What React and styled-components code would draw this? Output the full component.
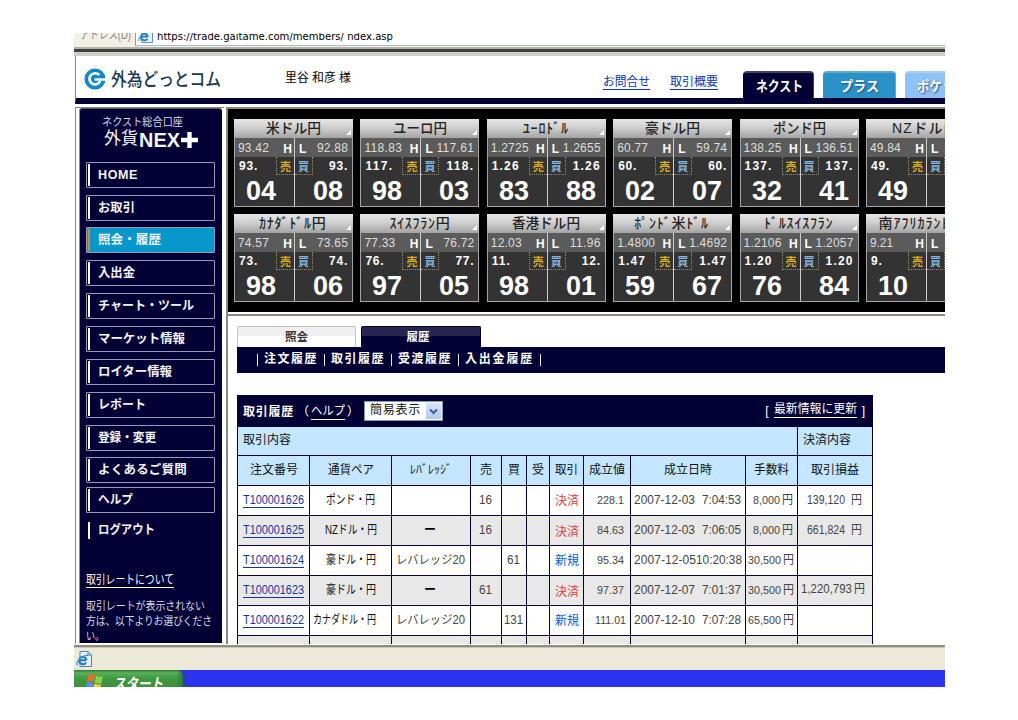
import React, { useLayoutEffect, useRef } from "react";
import styled, { createGlobalStyle, css } from "styled-components";

const Global = createGlobalStyle`
  * { box-sizing: border-box; }
  body { margin: 0; background: #fff; font-family: "Liberation Sans", "Noto Sans CJK JP", sans-serif; font-size: 12px; color: #000; }
`;

const NAVY = "#020034";

/* Text set to a fixed measure: tracked out when short, condensed when long. */
const FitBox = styled.span`
  display: inline-block;
  flex: none;
  width: ${(p) => p.$w}px;
  line-height: ${(p) => (p.$lh ? p.$lh + "px" : "1.3")};
  white-space: pre;
  text-align: left;
  font-size: ${(p) => (p.$size ? p.$size + "px" : "inherit")};
  color: ${(p) => p.$color || "inherit"};
  ${(p) => p.$bold && css`font-weight: ${p.$bold === true ? 700 : p.$bold};`}
  ${(p) => p.$line && css`border-bottom: 1px solid currentColor; line-height: 1.1;`}
`;
const FitInner = styled.span`
  display: inline-block;
  transform-origin: 0 50%;
`;
function Fit({ w, size, color, bold, line, lh, children }) {
  const ref = useRef(null);
  useLayoutEffect(() => {
    const el = ref.current;
    el.style.transform = "none";
    el.style.letterSpacing = "0px";
    const natural = el.getBoundingClientRect().width;
    const count = el.textContent.length;
    if (natural > w) el.style.transform = `scaleX(${w / natural})`;
    else if (count > 1) el.style.letterSpacing = `${(w - natural) / count}px`;
  }, [w, children]);
  return (
    <FitBox $w={w} $size={size} $color={color} $bold={bold} $line={line} $lh={lh}>
      <FitInner ref={ref}>{children}</FitInner>
    </FitBox>
  );
}

const Screen = styled.div`
  width: 1018px;
  height: 720px;
  padding: 33px 73px 33px 74px;
  overflow: hidden;
  background: #fff;
`;
const Browser = styled.div`
  width: 871px;
  height: 654px;
  display: flex;
  flex-direction: column;
  overflow: hidden;
`;
const AddressBar = styled.div`
  height: 14px;
  flex: none;
  display: flex;
  background: #f1efe6;
  overflow: hidden;
`;
const AddressLabel = styled.div`
  width: 61px;
  padding-left: 6px;
  color: #8a8880;
  margin-top: -5px;
`;
const AddressField = styled.div`
  flex: 1;
  height: 13px;
  display: flex;
  gap: 4px;
  padding-left: 2px;
  background: #fff;
  border-left: 1px solid #7f9db9;
  border-bottom: 1px solid #a9bccd;
  font-family: "DejaVu Sans", sans-serif;
  svg { margin-top: -5px; }
`;
const AddressText = styled.div`
  margin-top: -4px;
`;
const FrameEdge = styled.div`
  flex: none;
  height: 9px;
  border-top: 2px solid #b5b2a6;
  border-bottom: 4px solid #cdcdcd;
  background: #3f3f3f;
`;

const Header = styled.header`
  flex: none;
  height: 48px;
  margin-left: 1px;
  display: flex;
  border-left: 1px solid #8c8a80;
  border-bottom: 6px solid ${NAVY};
  background: #fff;
`;
const Brand = styled.div`
  width: 209px;
  padding: 0 0 0 8px;
  height: 46px;
  display: flex;
  align-items: center;
  gap: 5px;
`;
const BrandName = styled.div`
  padding-top: 4px;
`;
const UserName = styled.div`
  width: 318px;
  height: 46px;
  display: flex;
  align-items: center;
`;
const TopLinks = styled.nav`
  width: 140px;
  height: 54px;
  display: flex;
  align-items: center;
  gap: 20px;
  color: #0a35b8;
`;
const ServiceTabs = styled.div`
  display: flex;
  gap: 9px;
  padding-top: 15px;
  width: 202px;
  overflow: hidden;
`;
const ServiceTab = styled.div`
  flex: none;
  width: ${(p) => p.$w}px;
  height: 27px;
  padding: 4px 0 0 ${(p) => p.$pad}px;
  border-radius: 4px 4px 0 0;
  border-top: 2px solid ${(p) => p.$edge};
  border-right: 1px solid ${(p) => p.$edge};
  background: ${(p) => p.$bg};
  color: #fff;
  text-shadow: ${(p) => (p.$shade ? "1px 1px 2px #234e7c" : "none")};
`;

const Panes = styled.div`
  flex: none;
  height: 538px;
  margin-left: 1px;
  margin-top: 3px;
  display: flex;
  background: #fff;
`;
const SidePane = styled.aside`
  width: 149px;
  height: 537px;
  padding-left: 3px;
  border-top: 1px solid #8c8a80;
  border-left: 1px solid #8c8a80;
`;
const SideMenu = styled.div`
  width: 143px;
  height: 535px;
  padding: 6px 0 0 6px;
  background: ${NAVY};
  border-left: 1px solid #8c8a94;
  border-top: 1px solid #55536a;
  border-radius: 3px 3px 0 0;
  overflow: hidden;
  color: #f4f4f8;
`;
const Product = styled.div`
  height: 47px;
  display: flex;
  flex-direction: column;
`;
const ProductSub = styled.div`
  padding-left: 16px;
  height: 15px;
  display: flex;
  align-items: center;
`;
const ProductName = styled.div`
  padding-left: 18px;
  height: 19px;
  display: flex;
  align-items: center;
  gap: 1px;
`;
const MenuItem = styled.div`
  width: 129px;
  height: 26px;
  margin-top: ${(p) => p.$gap}px;
  padding: 1px 0 1px 1px;
  display: flex;
  align-items: center;
  border: 1px solid ${(p) => (p.$plain ? "transparent" : "#9a99b4")};
  border-radius: 1px;
  background: ${(p) => (p.$on ? "#0798cb" : "transparent")};
`;
const MenuMark = styled.span`
  width: 2px;
  height: ${(p) => (p.$short ? "17px" : "22px")};
  margin-right: 8px;
  background: ${(p) => (p.$on ? "#c98d33" : "#fff")};
`;
const SideNotes = styled.div`
  margin-top: 31px;
  display: flex;
  flex-direction: column;
  align-items: flex-start;
  color: #d9d9e4;
`;
const NoteLines = styled.p`
  margin: 11px 0 0;
  display: flex;
  flex-direction: column;
`;

const MainPane = styled.main`
  flex: 1;
  min-width: 0;
  margin-left: 2px;
  border-left: 2px solid #8c8a80;
  border-top: 2px solid #8c8a80;
  height: 537px;
  overflow: hidden;
`;
const QuoteBoard = styled.section`
  height: 203px;
  padding: 10px 0 0 6px;
  display: flex;
  flex-direction: column;
  gap: 7px;
  background: #000;
  overflow: hidden;
`;
const QuoteRow = styled.div`
  display: flex;
  gap: 7.4px;
`;
const Card = styled.article`
  flex: none;
  width: 119px;
  height: 88px;
  display: flex;
  flex-direction: column;
  background: #333;
  border: 1px solid #a5a5a5;
  border-top: 0;
`;
const CardTitle = styled.div`
  flex: none;
  height: 19px;
  margin: 0 -1px;
  display: flex;
  align-items: center;
  justify-content: center;
  background: linear-gradient(#e6e6e6, #cfcfcf 45%, #a4a4a4);
  color: #222;
  position: relative;
  &::after {
    content: "";
    position: absolute;
    right: 2px;
    bottom: 3px;
    border-left: 5px solid transparent;
    border-bottom: 5px solid #fff;
  }
`;
const Halves = styled.div`
  flex: 1;
  min-height: 0;
  display: flex;
`;
const Half = styled.div`
  flex: none;
  width: ${(p) => (p.$right ? 57 : 60)}px;
  display: flex;
  flex-direction: column;
  ${(p) => !p.$right && css`border-right: 1px solid #ccc;`}
`;
const Extreme = styled.div`
  flex: none;
  height: 19px;
  padding: 2px 4px 0 ${(p) => (p.$right ? 4 : 3)}px;
  ${(p) => !p.$right && css`padding-right: 2px;`}
  display: flex;
  align-items: center;
  justify-content: space-between;
  background: #5b5b5b;
  color: #dedede;
  b { font-size: 12px; color: #fff; }
`;
const Handle = styled.div`
  flex: none;
  height: 18px;
  display: flex;
  align-items: center;
  justify-content: space-between;
  color: #fff;
  padding: ${(p) => (p.$right ? "0 4px 0 0" : "0 0 0 4px")};
`;
const Side = styled.span`
  height: 18px;
  width: 18px;
  display: flex;
  align-items: center;
  justify-content: center;
  border: 1px dotted #998d70;
  border-top: 0;
  ${(p) => (p.$buy ? "border-left: 0;" : "border-right: 0;")}
  color: ${(p) => (p.$buy ? "#83b4dc" : "#dcae1c")};
  font-size: 11px;
  font-weight: 700;
`;
const Pips = styled.div`
  flex: 1;
  min-height: 0;
  padding-left: ${(p) => (p.$right ? 18 : 11)}px;
  display: flex;
  align-items: center;
  color: #fff;
`;

const History = styled.section`
  height: 332px;
  margin-top: 2px;
  border-top: 2px solid #8c8a80;
  padding: 10px 0 0 9px;
  overflow: hidden;
`;
const ViewTabs = styled.div`
  display: flex;
  gap: 5px;
`;
const ViewTab = styled.div`
  width: ${(p) => (p.$on ? 120 : 119)}px;
  height: 21px;
  display: flex;
  align-items: center;
  justify-content: center;
  padding-right: ${(p) => (p.$on ? 6 : 0)}px;
  border-radius: 2px 2px 0 0;
  border: 1px solid ${(p) => (p.$on ? NAVY : "#c4c4c4")};
  border-bottom: 0;
  background: ${(p) => (p.$on ? `linear-gradient(#28264e 9px, ${NAVY} 9px)` : "linear-gradient(#efefef 9px, #fff 9px)")};
  color: ${(p) => (p.$on ? "#fff" : "#333")};
`;
const SubNav = styled.nav`
  height: 26px;
  padding-left: 20px;
  display: flex;
  align-items: center;
  gap: 6px;
  background: ${NAVY};
  color: #fff;
`;
const Bar = styled.i`
  width: 1px;
  height: 12px;
  background: #e8e8f0;
`;
const Table = styled.div`
  width: 636px;
  margin-top: 22px;
  border-left: 1px solid ${NAVY};
`;
const Caption = styled.div`
  height: 32px;
  padding: 0 8px 0 5px;
  display: flex;
  align-items: center;
  background: ${NAVY};
  color: #fff;
`;
const CaptionText = styled.div`
  padding-top: 3px;
`;
const HelpLink = styled.div`
  width: 70px;
  padding: 3px 0 0 3px;
  display: flex;
  align-items: center;
  gap: 2px;
`;
const Select = styled.div`
  width: 79px;
  height: 20px;
  padding: 0 1px 0 5px;
  display: flex;
  align-items: center;
  justify-content: space-between;
  background: #fff;
  border: 1px solid #7f9db9;
  color: #111;
`;
const SelectArrow = styled.span`
  width: 15px;
  height: 16px;
  display: flex;
  align-items: center;
  justify-content: center;
  background: linear-gradient(#d6e2fd, #b4c8f6);
  border-radius: 1px;
`;
const Refresh = styled.div`
  margin-left: auto;
  margin-top: -1px;
  display: flex;
  align-items: center;
  gap: 5px;
`;
const Row = styled.div`
  height: ${(p) => p.$h || 30}px;
  display: grid;
  grid-template-columns: ${(p) => p.$cols || "72px 82px 79px 31px 25px 23px 34px 47px 115px 52px 75px"};
  background: ${(p) => p.$bg};
`;
const Cell = styled.div`
  display: flex;
  align-items: center;
  justify-content: ${(p) => (p.$start ? "flex-start" : "center")};
  gap: ${(p) => p.$gap || 0}px;
  padding: ${(p) => p.$pad || "0"};
  border-right: 1px solid ${NAVY};
  border-bottom: 1px solid ${NAVY};
  color: ${(p) => p.$color || "#444"};
  overflow: hidden;
`;

const StatusBar = styled.div`
  flex: none;
  height: 25px;
  padding: 4px 0 0 2px;
  border-top: 2px solid #8f8d7e;
  box-shadow: inset 0 1px 0 #c9c6b6;
  background: #ece9d8;
`;
const TaskBar = styled.div`
  flex: none;
  height: 17px;
  display: flex;
  background: linear-gradient(90deg, #2440a8 100px, #2c33ee 118px);
`;
const StartButton = styled.div`
  width: 109px;
  height: 17px;
  padding: 4px 0 0 11px;
  display: flex;
  gap: 9px;
  overflow: hidden;
  border-top-right-radius: 6px;
  background: linear-gradient(90deg, transparent 94%, #2a7a38), linear-gradient(#2f7a33, #5cb15b 3px, #3f9a42 8px, #3b903d);
  color: #fff;
  font-style: italic;
  svg { flex: none; }
`;

const BrandMark = () => (
  <svg width="22" height="22" viewBox="0 0 22 22">
    <circle cx="11" cy="11" r="10.5" fill="#1187c9" />
    <path d="M15.300 7.100A5.600 5.600 0 1 0 16.300 12.800" fill="none" stroke="#fff" strokeWidth="2.600" />
    <path d="M10.500 11.500H22" stroke="#fff" strokeWidth="2.400" />
  </svg>
);
const PageIcon = ({ size = 16 }) => (
  <svg width={size} height={size} viewBox="0 0 16 16">
    <path d="M4 .5h8l3.500 3.500v11.500H4z" fill="#e6f0fc" stroke="#5880b8" />
    <path d="M12 .5V4h3.500" fill="none" stroke="#5880b8" />
    <path d="M10.500 9.200H3.200A3.700 3.700 0 0 1 10.500 9.200M10 11.500A3.700 3.700 0 0 1 3.200 9.500" fill="none" stroke="#2277c0" strokeWidth="2" />
    <path d="M1.500 14C-1 12 5 4 12.500 4.500" fill="none" stroke="#3a94d8" strokeWidth="1.200" />
  </svg>
);
const PlusMark = () => (
  <svg width="17" height="16" viewBox="0 0 17 16">
    <path d="M8.5 0V16M0 8H17" stroke="#fff" strokeWidth="4.4" />
  </svg>
);
const Flag = () => (
  <svg width="19" height="17" viewBox="0 0 19 17">
    <path d="M3 2Q6 -1 10 1L8.500 8Q5 6 1.500 8.500Z" fill="#ee6a32" />
    <path d="M11 1.500Q14 4 18 2L16.500 9Q13 10.500 9.500 8.500Z" fill="#8fd046" />
    <path d="M1.200 9.500Q5 7 8.200 9L7 16H0Z" fill="#5a8ff0" />
    <path d="M9.200 9.500Q13 11.500 16.200 10L15 16H8Z" fill="#f8d040" />
  </svg>
);

const MENU = [
  ["HOME", 40, 0], ["お取引", 37, 7], ["照会・履歴", 63, 6, true], ["入出金", 37, 7],
  ["チャート・ツール", 96, 7], ["マーケット情報", 87, 7], ["ロイター情報", 74, 7], ["レポート", 48, 7],
  ["登録・変更", 58, 7], ["よくあるご質問", 89, 6], ["ヘルプ", 35, 4],
];

const QUOTES = [
  [
    ["米ドル円", 55, "93.42", "92.88", "93.", "93.", "04", "08"],
    ["ユーロ円", 54, "118.83", "117.61", "117.", "118.", "98", "03"],
    ["ﾕｰﾛﾄﾞﾙ", 47, "1.2725", "1.2655", "1.26", "1.26", "83", "88"],
    ["豪ドル円", 55, "60.77", "59.74", "60.", "60.", "02", "07"],
    ["ポンド円", 53, "138.25", "136.51", "137.", "137.", "32", "41"],
    ["NZドル円", 67, "49.84", "", "49.", "", "49", ""],
  ],
  [
    ["ｶﾅﾀﾞﾄﾞﾙ円", 69, "74.57", "73.65", "73.", "74.", "98", "06"],
    ["ｽｲｽﾌﾗﾝ円", 61, "77.33", "76.72", "76.", "77.", "97", "05"],
    ["香港ドル円", 68, "12.03", "11.96", "11.", "12.", "98", "01"],
    ["ﾎﾟﾝﾄﾞ米ﾄﾞﾙ", 77, "1.4800", "1.4692", "1.47", "1.47", "59", "67"],
    ["ﾄﾞﾙｽｲｽﾌﾗﾝ", 70, "1.2106", "1.2057", "1.20", "1.20", "76", "84"],
    ["南ｱﾌﾘｶﾗﾝﾄﾞ円", 94, "9.21", "", "9.", "", "10", ""],
  ],
];
const rateWidth = (s) => (s.length === 6 ? 38 : s.length === 5 ? 31 : 23);
const handleWidth = (s) => (s.length === 4 ? 28 : s.length === 3 ? 19 : 12);

function Quote({ q: [name, w, high, low, bid, ask, bp, ap] }) {
  return (
    <Card>
      <CardTitle><Fit w={w} size={14} bold={500}>{name}</Fit></CardTitle>
      <Halves>
        <Half>
          <Extreme><Fit w={rateWidth(high)}>{high}</Fit><b>H</b></Extreme>
          <Handle><Fit w={handleWidth(bid)} lh={18} bold>{bid}</Fit><Side>売</Side></Handle>
          <Pips><Fit w={30} size={27} lh={30} bold>{bp}</Fit></Pips>
        </Half>
        <Half $right>
          <Extreme $right><b>L</b>{low && <Fit w={rateWidth(low)}>{low}</Fit>}</Extreme>
          <Handle $right><Side $buy>買</Side>{ask && <Fit w={handleWidth(ask)} lh={18} bold>{ask}</Fit>}</Handle>
          <Pips $right>{ap && <Fit w={30} size={27} lh={30} bold>{ap}</Fit>}</Pips>
        </Half>
      </Halves>
    </Card>
  );
}

const HEADS = [
  ["注文番号", 48], ["通貨ペア", 46], ["ﾚﾊﾞﾚｯｼﾞ", 42], ["売", 12], ["買", 12], ["受", 12],
  ["取引", 23], ["成立値", 36], ["成立日時", 48], ["手数料", 35], ["取引損益", 48],
];
const TRADES = [
  { id: "T100001626", pair: "ポンド・円", pw: 49, sell: "16", kind: "決済", price: "228.1", date: "2007-12-03", time: "7:04:53", fee: "8,000", pl: "139,120" },
  { id: "T100001625", pair: "NZドル・円", pw: 52, lev: "ー", sell: "16", kind: "決済", price: "84.63", date: "2007-12-03", time: "7:06:05", fee: "8,000", pl: "661,824" },
  { id: "T100001624", pair: "豪ドル・円", pw: 50, lev: "レバレッジ20", buy: "61", kind: "新規", price: "95.34", date: "2007-12-05", time: "10:20:38", fee: "30,500" },
  { id: "T100001623", pair: "豪ドル・円", pw: 50, lev: "ー", sell: "61", kind: "決済", price: "97.37", date: "2007-12-07", time: "7:01:37", fee: "30,500", pl: "1,220,793" },
  { id: "T100001622", pair: "カナダドル・円", pw: 63, lev: "レバレッジ20", buy: "131", kind: "新規", price: "111.01", date: "2007-12-10", time: "7:07:28", fee: "65,500" },
];

function Trade({ t, striped }) {
  const wide = t.time.length === 8;
  return (
    <Row $bg={striped ? "#e8e8e8" : "#fff"}>
      <Cell $color="#1238a0" $pad="1px 0 0"><Fit w={61} line>{t.id}</Fit></Cell>
      <Cell $color="#111" $pad={t.pw > 60 ? "0 12px 0 0" : "0"}><Fit w={t.pw}>{t.pair}</Fit></Cell>
      <Cell $pad="1px 2px 0 0">{t.lev && <Fit w={t.lev === "ー" ? 12 : 69} bold={t.lev === "ー"} color={t.lev === "ー" ? "#000" : "#444"}>{t.lev}</Fit>}</Cell>
      <Cell $pad="1px 1px 0 0">{t.sell && <Fit w={13}>{t.sell}</Fit>}</Cell>
      <Cell $pad="1px 1px 0 0">{t.buy && <Fit w={t.buy.length > 2 ? 19 : 13}>{t.buy}</Fit>}</Cell>
      <Cell />
      <Cell $color={t.kind === "決済" ? "#e2403a" : "#0a58e0"} $pad={striped ? "4px 0 0" : "2px 0 0"}><Fit w={24}>{t.kind}</Fit></Cell>
      <Cell $pad="0 0 0 6px"><Fit w={t.price.length > 5 ? 31 : 27} size={11}>{t.price}</Fit></Cell>
      <Cell $gap={wide ? 0 : 7} $start $pad="0 0 0 3px"><Fit w={wide ? 62 : 61}>{t.date}</Fit><Fit w={wide ? 46 : 39}>{t.time}</Fit></Cell>
      <Cell $gap={2} $pad={t.fee.length < 6 ? "0 0 0 2px" : "0 2px 0 0"}><Fit w={t.fee.length < 6 ? 27 : 33} size={11}>{t.fee}</Fit><Fit w={11}>円</Fit></Cell>
      <Cell $gap={t.pl && t.pl.length > 7 ? 2 : 6} $pad={t.pl && t.pl.length > 7 ? "0 4px 2px 0" : "0 2px 0 0"}>{t.pl && <><Fit w={t.pl.length > 7 ? 51 : 38}>{t.pl}</Fit><Fit w={11}>円</Fit></>}</Cell>
    </Row>
  );
}

export default function App() {
  return (
    <Screen>
      <Global />
      <Browser>
        <AddressBar>
          <AddressLabel><Fit w={51}>アドレス(D)</Fit></AddressLabel>
          <AddressField>
            <PageIcon size={15} />
            <AddressText><Fit w={236} size={11}>https://trade.gaitame.com/members/ ndex.asp</Fit></AddressText>
          </AddressField>
        </AddressBar>
        <FrameEdge />
        <Header>
          <Brand><BrandMark /><BrandName><Fit w={110} size={18} color="#17384e" bold={500}>外為どっとコム</Fit></BrandName></Brand>
          <UserName><Fit w={66}>里谷 和彦 様</Fit></UserName>
          <TopLinks><Fit w={47} line>お問合せ</Fit><Fit w={48} line>取引概要</Fit></TopLinks>
          <ServiceTabs>
            <ServiceTab $w={71} $pad={13} $bg={NAVY} $edge="#44435f"><Fit w={47} size={14} bold>ネクスト</Fit></ServiceTab>
            <ServiceTab $w={73} $pad={17} $bg="#2a92c8" $edge="#66a8cc" $shade><Fit w={39} size={14} bold>プラス</Fit></ServiceTab>
            <ServiceTab $w={73} $pad={12} $bg="#8fc2f7" $edge="#aacdf0" $shade><Fit w={50} size={14} bold>ポケット</Fit></ServiceTab>
          </ServiceTabs>
        </Header>
        <Panes>
          <SidePane>
            <SideMenu>
              <Product>
                <ProductSub><Fit w={81} size={11} color="#d8d8e6">ネクスト総合口座</Fit></ProductSub>
                <ProductName><Fit w={34} size={17}>外貨</Fit><Fit w={41} size={20} bold>NEX</Fit><PlusMark /></ProductName>
              </Product>
              {MENU.map(([label, w, gap, on]) => (
                <MenuItem key={label} $gap={gap} $on={on}>
                  <MenuMark $on={on} /><Fit w={w} size={12.5} bold>{label}</Fit>
                </MenuItem>
              ))}
              <MenuItem $gap={4} $plain><MenuMark $short /><Fit w={57} size={12.5} bold>ログアウト</Fit></MenuItem>
              <SideNotes>
                <Fit w={88} line color="#fff">取引レートについて</Fit>
                <NoteLines>
                  <Fit w={119} size={11.5} lh={15}>取引レートが表示されない</Fit>
                  <Fit w={126} size={11.5} lh={15}>方は、以下よりお選びくださ</Fit>
                  <Fit w={18} size={11.5} lh={15}>い。</Fit>
                </NoteLines>
              </SideNotes>
            </SideMenu>
          </SidePane>
          <MainPane>
            <QuoteBoard>
              {QUOTES.map((row, i) => <QuoteRow key={i}>{row.map((q) => <Quote key={q[0]} q={q} />)}</QuoteRow>)}
            </QuoteBoard>
            <History>
              <ViewTabs>
                <ViewTab><Fit w={23} size={11.5} bold>照会</Fit></ViewTab>
                <ViewTab $on><Fit w={23} size={11.5} bold>履歴</Fit></ViewTab>
              </ViewTabs>
              <SubNav>
                <Bar /><Fit w={54} bold>注文履歴</Fit><Bar /><Fit w={54} bold>取引履歴</Fit><Bar />
                <Fit w={54} bold>受渡履歴</Fit><Bar /><Fit w={69} bold>入出金履歴</Fit><Bar />
              </SubNav>
              <Table>
                <Caption>
                  <CaptionText><Fit w={51} bold>取引履歴</Fit></CaptionText>
                  <HelpLink><Fit w={12}>（</Fit><Fit w={34} line>ヘルプ</Fit><Fit w={12}>）</Fit></HelpLink>
                  <Select>
                    <Fit w={51}>簡易表示</Fit>
                    <SelectArrow><svg width="9" height="7" viewBox="0 0 9 7"><path d="M1 1.500L4.500 5L8 1.500" fill="none" stroke="#44608c" strokeWidth="2" /></svg></SelectArrow>
                  </Select>
                  <Refresh><span>[</span><Fit w={83} line>最新情報に更新</Fit><span>]</span></Refresh>
                </Caption>
                <Row $h={29} $cols="560px 75px" $bg="#c4e6ff">
                  <Cell $start $pad="0 0 0 5px" $color="#111"><Fit w={48}>取引内容</Fit></Cell>
                  <Cell $start $pad="0 0 0 5px" $color="#111"><Fit w={48}>決済内容</Fit></Cell>
                </Row>
                <Row $bg="#c4e6ff">
                  {HEADS.map(([h, w]) => <Cell key={h} $color="#111"><Fit w={w}>{h}</Fit></Cell>)}
                </Row>
                {TRADES.map((t, i) => <Trade key={t.id} t={t} striped={i % 2 === 1} />)}
                <Row $bg="#e8e8e8">{HEADS.map(([h]) => <Cell key={h} />)}</Row>
              </Table>
            </History>
          </MainPane>
        </Panes>
        <StatusBar><PageIcon /></StatusBar>
        <TaskBar><StartButton><Flag /><Fit w={50} size={15} bold>スタート</Fit></StartButton></TaskBar>
      </Browser>
    </Screen>
  );
}
